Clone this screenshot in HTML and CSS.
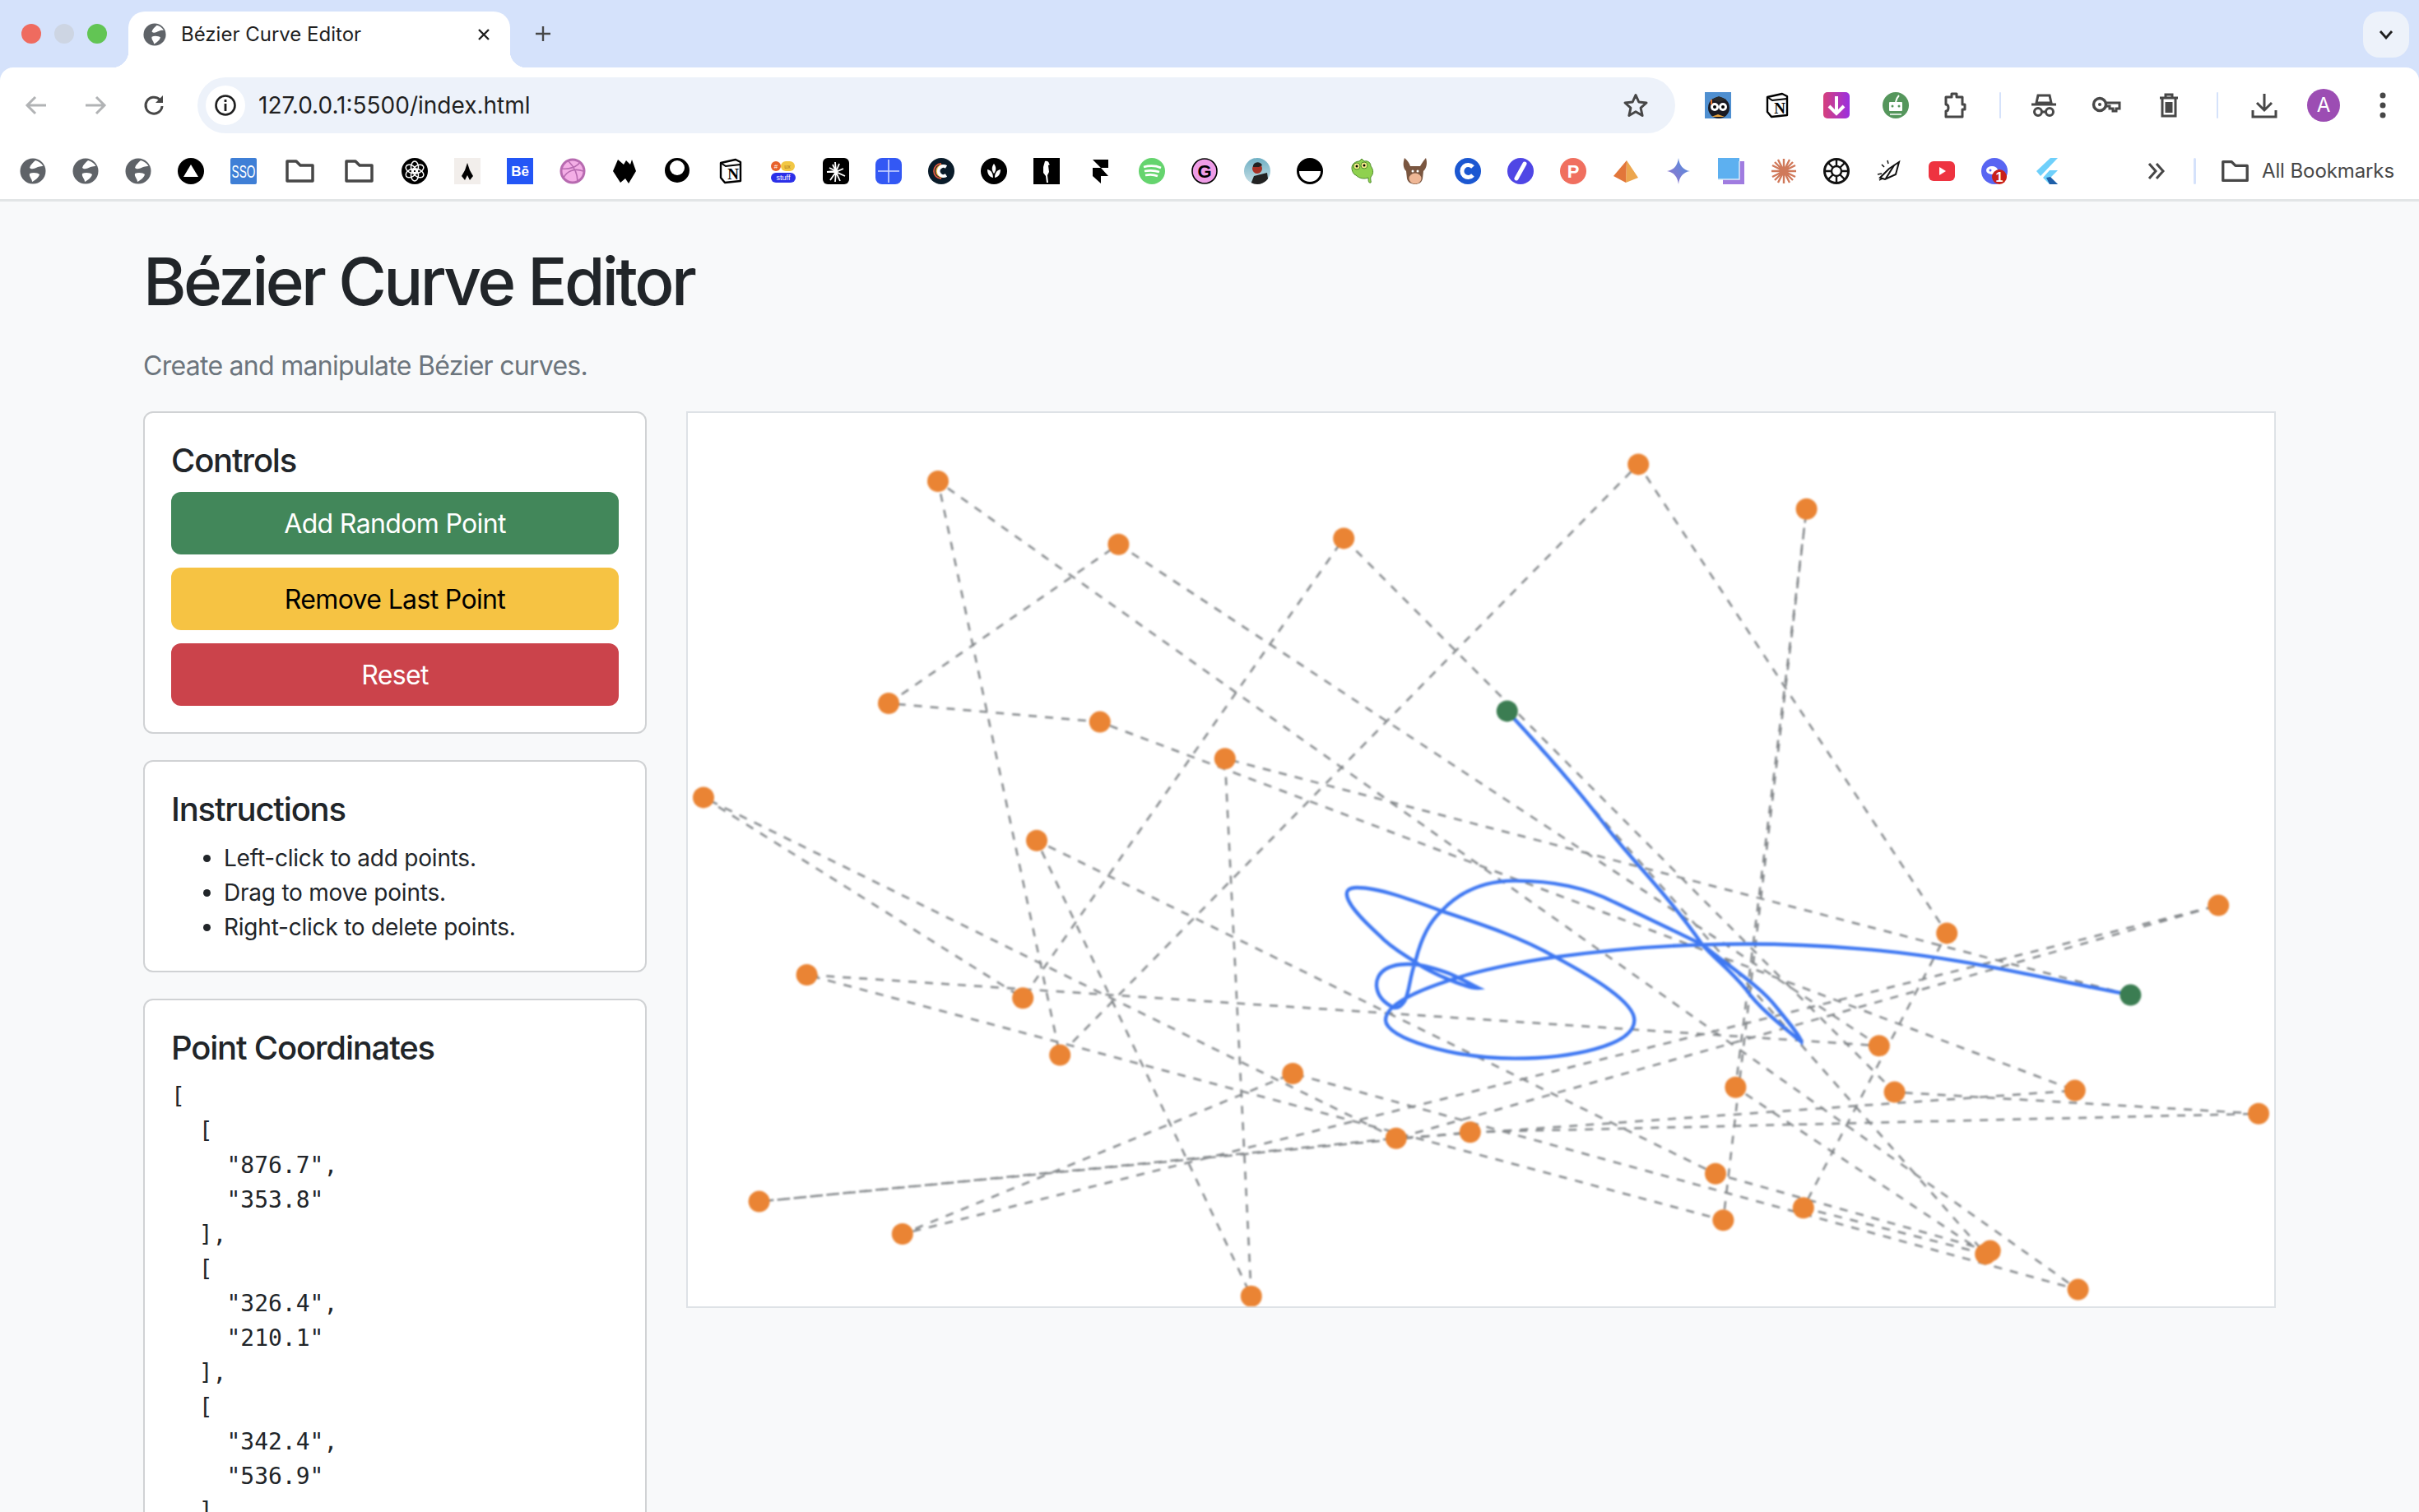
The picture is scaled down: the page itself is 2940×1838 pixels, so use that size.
FILE: index.html
```html
<!DOCTYPE html>
<html>
  <head>
    <meta charset="utf-8">
    <title>Bézier Curve Editor</title>
    <link rel="stylesheet" href="styles.css">
  </head>
  <body>
    <svg class="defs" width="0" height="0">
      <symbol id="globe" viewBox="0 0 32 32">
        <circle cx="16" cy="16" r="15.500" fill="#5f6368"/>
        <path fill="#fff" d="M19 3c-3 3-6 5-7 9 3 3 7 0 10-1 3-1 5-1 6.500-1C26 6 23 4 19 3zM12 19c4-2 10-1 12 1-1 4-5 7-9 9 0-4-4-6-3-10z"/>
      </symbol>
      <symbol id="folder" viewBox="0 0 40 32">
        <path fill="none" stroke="#474747" stroke-width="3.500" stroke-linejoin="round" d="M5 4h11l5 5h15v19H5z"/>
      </symbol>
    </svg>

    <header class="browser">
      <div class="tabstrip">
        <div class="lights">
          <span class="light red"></span>
          <span class="light grey"></span>
          <span class="light green"></span>
        </div>
        <div class="tab">
          <svg class="tab-icon"><use href="#globe"/></svg>
          <span class="tab-title">Bézier Curve Editor</span>
          <svg class="tab-close" viewBox="0 0 16 16"><path d="M2 2l12 12M14 2L2 14" stroke="#1f1f1f" stroke-width="2.400"/></svg>
        </div>
        <svg class="new-tab" viewBox="0 0 20 20"><path d="M10 1v18M1 10h18" stroke="#474747" stroke-width="2.400"/></svg>
        <div class="tab-list">
          <svg viewBox="0 0 18 12" width="18" height="12"><path d="M2 2l7 8 7-8" fill="none" stroke="#1f1f1f" stroke-width="2.800"/></svg>
        </div>
      </div>

      <div class="toolbar">
        <div class="tb-btn"><svg viewBox="0 0 32 32" width="32" height="32"><path d="M28 16H6M15 6L5 16l10 10" fill="none" stroke="#b1b3b5" stroke-width="3"/></svg></div>
        <div class="tb-btn"><svg viewBox="0 0 32 32" width="32" height="32"><path d="M4 16h22M17 6l10 10-10 10" fill="none" stroke="#b1b3b5" stroke-width="3"/></svg></div>
        <div class="tb-btn"><svg viewBox="0 0 32 32" width="32" height="32"><path d="M25 17a10 10 0 1 1-3-8l3 3" fill="none" stroke="#474747" stroke-width="3"/><path d="M26 4v9h-9z" fill="#474747"/></svg></div>
        <div class="omnibox">
          <div class="site-chip">
            <svg viewBox="0 0 28 28" width="28" height="28"><circle cx="14" cy="14" r="11.500" fill="none" stroke="#1f1f1f" stroke-width="2.600"/><path d="M14 12v9M14 7v3" stroke="#1f1f1f" stroke-width="2.800"/></svg>
          </div>
          <span class="url">127.0.0.1:5500/index.html</span>
          <svg class="star" viewBox="0 0 32 32" width="32" height="32"><path d="M16 3.500l3.800 8.500 9.200 1-6.900 6.200 2 9.300-8.100-4.700-8.100 4.700 2-9.300L3 13l9.200-1z" fill="none" stroke="#474747" stroke-width="3" stroke-linejoin="round"/></svg>
        </div>
        <div class="tb-group">
          <div class="tb-btn"><svg viewBox="0 0 32 32" width="32" height="32"><rect width="32" height="32" fill="#4f8fd0"/><circle cx="17" cy="19" r="13" fill="#1a1a22"/><circle cx="12" cy="18" r="5" fill="#fff"/><circle cx="22" cy="18" r="5" fill="#fff"/><circle cx="12" cy="18" r="2"/><circle cx="22" cy="18" r="2"/><path d="M8 9l9-4 9 4-9 3z" fill="#2b2b2b"/><path d="M7 9h2v6H7z" fill="#e8732c"/><path d="M8 30l8-3 8 3z" fill="#e8a33c"/></svg></div>
          <div class="tb-btn"><svg viewBox="0 0 32 32" width="32" height="32"><path d="M4 6l18-4 6 3v23l-19 2-5-6z" fill="#fff" stroke="#000" stroke-width="2.400" stroke-linejoin="round"/><path d="M4 6l6 4 18-2" fill="none" stroke="#000" stroke-width="2"/><text x="19" y="26" class="icon-serif" font-size="19" text-anchor="middle">N</text></svg></div>
          <div class="tb-btn"><svg viewBox="0 0 32 32" width="32" height="32"><defs><linearGradient id="pinkGrad" x1="0" x2="1"><stop offset="0" stop-color="#d6407c"/><stop offset="1" stop-color="#9a2fe0"/></linearGradient></defs><rect width="32" height="32" rx="5" fill="url(#pinkGrad)"/><path d="M16 5v20M7 17l9 9 9-9" fill="none" stroke="#fff" stroke-width="4"/></svg></div>
          <div class="tb-btn"><svg viewBox="0 0 32 32" width="32" height="32"><circle cx="16" cy="16" r="16" fill="#55965c"/><rect x="8" y="12" width="16" height="11" rx="1" fill="#fff"/><circle cx="12" cy="17" r="1.500" fill="#55965c"/><circle cx="20" cy="17" r="1.500" fill="#55965c"/><path d="M16 12c1-4 2-6 4-8" stroke="#fff" stroke-width="2" fill="none"/><path d="M9 27h14" stroke="#fff" stroke-width="1.500"/></svg></div>
          <div class="tb-btn"><svg viewBox="0 0 32 32" width="32" height="32"><path d="M5 6h7V2h6v4h7v9h3v6h-3v9H5v-7c4 0 4-8 0-8z" fill="none" stroke="#474747" stroke-width="3" stroke-linejoin="round"/></svg></div>
        </div>
        <span class="tb-sep sep-a"></span>
        <div class="tb-group">
          <div class="tb-btn wide"><svg viewBox="0 0 32 32" width="32" height="32"><path d="M9 4h14l2 9H7zM1 15h30" fill="none" stroke="#474747" stroke-width="3"/><circle cx="9" cy="24" r="4.500" fill="none" stroke="#474747" stroke-width="3"/><circle cx="23" cy="24" r="4.500" fill="none" stroke="#474747" stroke-width="3"/><path d="M13 24h6" stroke="#474747" stroke-width="3"/></svg></div>
          <div class="tb-btn wide"><svg viewBox="0 0 36 32" width="36" height="32"><circle cx="10" cy="15" r="7.500" fill="none" stroke="#474747" stroke-width="3.400"/><circle cx="10" cy="15" r="2" fill="#474747"/><path d="M17 13h17v7h-4v3h-4v-3h-4v-3h-5" fill="none" stroke="#474747" stroke-width="3"/></svg></div>
          <div class="tb-btn wide"><svg viewBox="0 0 32 32" width="32" height="32"><path d="M5 7h22M12 7V3h8v4M8 8v21h16V8M13 12v13M16 12v13M19 12v13" fill="none" stroke="#474747" stroke-width="3"/></svg></div>
        </div>
        <span class="tb-sep sep-b"></span>
        <div class="tb-group">
          <div class="tb-btn"><svg viewBox="0 0 32 32" width="32" height="32"><path d="M16 2v20M7 13l9 9 9-9M2 22v8h28v-8" fill="none" stroke="#474747" stroke-width="3"/></svg></div>
          <div class="tb-btn"><span class="avatar">A</span></div>
          <div class="tb-btn"><svg viewBox="0 0 8 32" width="8" height="32"><circle cx="4" cy="4" r="3.500" fill="#474747"/><circle cx="4" cy="16" r="3.500" fill="#474747"/><circle cx="4" cy="28" r="3.500" fill="#474747"/></svg></div>
        </div>
      </div>

      <nav class="bookmarks">
        <svg class="bm"><use href="#globe"/></svg>
        <svg class="bm"><use href="#globe"/></svg>
        <svg class="bm"><use href="#globe"/></svg>
        <svg class="bm" viewBox="0 0 32 32"><circle cx="16" cy="16" r="16"/><path d="M16 8l9 15H7z" fill="#fff"/></svg>
        <svg class="bm" viewBox="0 0 32 32"><rect width="32" height="32" rx="2" fill="#3f7fd6"/><text x="25.800" y="24" class="icon-sans" font-size="22" fill="#fff" text-anchor="middle" transform="scale(.62 1)">SSO</text></svg>
        <svg class="bm-folder"><use href="#folder"/></svg>
        <svg class="bm-folder"><use href="#folder"/></svg>
        <svg class="bm" viewBox="0 0 32 32"><circle cx="16" cy="16" r="16"/><g fill="none" stroke="#fff" stroke-width="1.500"><ellipse cx="16" cy="11" rx="4.500" ry="7"/><ellipse cx="16" cy="11" rx="4.500" ry="7" transform="rotate(60 16 16)"/><ellipse cx="16" cy="11" rx="4.500" ry="7" transform="rotate(120 16 16)"/><ellipse cx="16" cy="11" rx="4.500" ry="7" transform="rotate(180 16 16)"/><ellipse cx="16" cy="11" rx="4.500" ry="7" transform="rotate(240 16 16)"/><ellipse cx="16" cy="11" rx="4.500" ry="7" transform="rotate(300 16 16)"/></g></svg>
        <svg class="bm" viewBox="0 0 32 32"><rect width="32" height="32" fill="#f2eeeb"/><path d="M16 6l3 9 4 7-4 5-3-6-3 6-4-5 4-7z"/></svg>
        <svg class="bm" viewBox="0 0 32 32"><rect width="32" height="32" fill="#2356f6"/><text x="16" y="22" class="icon-sans" font-size="17" font-weight="700" fill="#fff" text-anchor="middle">Bē</text></svg>
        <svg class="bm" viewBox="0 0 32 32"><circle cx="16" cy="16" r="15.500" fill="#b76ab0"/><circle cx="16" cy="16" r="12.500" fill="#f4aee6"/><path d="M11 4c6 6 11 15 11 25M3 13c9 1 18-2 22-8M5 24c4-8 13-12 24-8" fill="none" stroke="#b76ab0" stroke-width="1.600"/></svg>
        <svg class="bm" viewBox="0 0 32 32"><path d="M7 2l7 6 3-5 5 5 2-6 5 14-9 15-4-6-6 5-9-14z"/></svg>
        <svg class="bm" viewBox="0 0 32 32"><circle cx="15" cy="15" r="15"/><circle cx="15" cy="12" r="9" fill="#fff"/></svg>
        <svg class="bm" viewBox="0 0 32 32"><path d="M4 6l18-4 6 3v23l-19 2-5-6z" fill="#fff" stroke="#000" stroke-width="2.400" stroke-linejoin="round"/><path d="M4 6l6 4 18-2" fill="none" stroke="#000" stroke-width="2"/><text x="19" y="26" class="icon-serif" font-size="19" text-anchor="middle">N</text></svg>
        <svg class="bm" viewBox="0 0 32 32"><circle cx="7" cy="10" r="6" fill="#e8622c"/><rect x="13" y="4" width="17" height="12" rx="6" fill="#f2c744"/><rect x="1" y="18" width="30" height="12" rx="6" fill="#2b2fe8"/><text x="7" y="13" font-size="8" fill="#fff" class="icon-sans" text-anchor="middle">#</text><text x="21" y="13" font-size="7" fill="#a8741a" class="icon-sans" text-anchor="middle">ux</text><text x="16" y="27" font-size="9" fill="#fff" class="icon-sans" text-anchor="middle">stuff</text></svg>
        <svg class="bm" viewBox="0 0 32 32"><rect width="32" height="32" rx="6"/><path d="M15 5l1 11-4-8 4 8-8-4 8 4-11 1 11 0-7 10 7-10-1 12 1-12 5 11-5-11 11 5-11-5 9-4-9 4 4-10-4 10" fill="none" stroke="#fff" stroke-width="1.800"/></svg>
        <svg class="bm" viewBox="0 0 32 32"><rect width="32" height="32" rx="8" fill="#3358f4"/><path d="M16 2v28M3 16h26" stroke="#cfd8ff" stroke-width="1.600"/></svg>
        <svg class="bm" viewBox="0 0 32 32"><circle cx="16" cy="16" r="16" fill="#0a1c2a"/><g fill="none" stroke-width="1.800"><path d="M16 7a9 9 0 0 0 0 18" stroke="#e25c3f"/><path d="M17 9a7 7 0 0 0 0 14" stroke="#f3b23d"/><path d="M18 11a5 5 0 0 0 0 10" stroke="#5cb4e8"/></g><path d="M22 11a6 6 0 1 0 0 10" fill="none" stroke="#fff" stroke-width="4"/></svg>
        <svg class="bm" viewBox="0 0 32 32"><circle cx="16" cy="16" r="16"/><path d="M16 7c3 4 3 8 0 12-3-4-3-8 0-12zM8 14c5 1 7 5 7 10-5-1-7-5-7-10zM24 14c-5 1-7 5-7 10 5-1 7-5 7-10z" fill="#fff"/></svg>
        <svg class="bm" viewBox="0 0 32 32"><rect width="32" height="32"/><path d="M14 4c3-1 5 1 5 3l1 1-2 1 1 8-2 4 1 9h-2l-1-8-3-4 0-7z" fill="#fff"/></svg>
        <svg class="bm" viewBox="0 0 32 32"><path d="M8 2h19v10H18zM8 12h10l9 10H18v9l-10-9z"/></svg>
        <svg class="bm" viewBox="0 0 32 32"><circle cx="16" cy="16" r="16" fill="#65d46e"/><path d="M6 11c7-2 14-2 21 1M7 16c6-1 12-1 18 1M8 21c5-1 10-1 15 1" fill="none" stroke="#fff" stroke-width="2.600"/></svg>
        <svg class="bm" viewBox="0 0 32 32"><circle cx="16" cy="16" r="15" fill="#ee9ce6" stroke="#000" stroke-width="1.600"/><text x="16" y="24" font-size="22" font-weight="700" class="icon-sans" text-anchor="middle">G</text></svg>
        <svg class="bm" viewBox="0 0 32 32"><defs><linearGradient id="skyGrad" x1="0" x2="0" y1="0" y2="1"><stop offset="0" stop-color="#6fb0c4"/><stop offset="1" stop-color="#c8dfe6"/></linearGradient><clipPath id="photoClip"><circle cx="16" cy="16" r="16"/></clipPath></defs><g clip-path="url(#photoClip)"><rect width="32" height="32" fill="url(#skyGrad)"/><path d="M8 32l4-10 16-4 2 14z" fill="#222"/><circle cx="16" cy="13" r="6" fill="#a83226"/><path d="M11 9c2-5 9-5 11 0l-4 2-7 0z" fill="#222"/></g></svg>
        <svg class="bm" viewBox="0 0 32 32"><circle cx="16" cy="16" r="14.500" fill="#fff" stroke="#000" stroke-width="3"/><path d="M1 16a15 15 0 0 1 30 0z"/></svg>
        <svg class="bm" viewBox="0 0 32 32"><path d="M3 12c0-5 5-8 9-8l3-3 3 3c5-1 8 2 8 6 4 5 3 10 0 13-1 3 1 6 0 7-3 1-3-3-3-6-5 2-11 1-15-3-3-1-5-5-5-9z" fill="#8fd14f" stroke="#4d8a2a"/><circle cx="9" cy="10" r="4" fill="#f7ee8a" stroke="#4d8a2a"/><circle cx="18" cy="9" r="4" fill="#f7ee8a" stroke="#4d8a2a"/><circle cx="9" cy="10" r="1.500"/><circle cx="18" cy="9" r="1.500"/></svg>
        <svg class="bm" viewBox="0 0 32 32"><path d="M3 0c4 3 6 7 7 10h12c2-3 4-7 7-10 2 6 1 12-3 16l-1 9c-1 5-5 7-9 7s-9-2-10-7l-1-9C1 12 1 6 3 0z" fill="#7a5640"/><ellipse cx="16" cy="25" rx="7.500" ry="6.500" fill="#efb796"/><circle cx="13" cy="16" r="1.500" fill="#fff"/><circle cx="19" cy="16" r="1.500" fill="#fff"/></svg>
        <svg class="bm" viewBox="0 0 32 32"><circle cx="16" cy="16" r="16" fill="#1b57d1"/><path d="M22 11a7.500 7.500 0 1 0 0 10" fill="none" stroke="#fff" stroke-width="5"/></svg>
        <svg class="bm" viewBox="0 0 32 32"><circle cx="16" cy="16" r="16" fill="#4f46e5"/><path d="M21 7L11 25" stroke="#fff" stroke-width="5" stroke-linecap="round"/></svg>
        <svg class="bm" viewBox="0 0 32 32"><circle cx="16" cy="16" r="16" fill="#f06f5f"/><text x="16" y="24" font-size="22" font-weight="700" fill="#fff" class="icon-sans" text-anchor="middle">P</text></svg>
        <svg class="bm" viewBox="0 0 32 32"><path d="M17 3l14 21-15 6z" fill="#eca64e"/><path d="M17 3L1 22l15 8z" fill="#e2763a"/></svg>
        <svg class="bm" viewBox="0 0 32 32"><defs><linearGradient id="starGrad" x1="0" x2="1" y1="1" y2="0"><stop offset="0" stop-color="#9b72cb"/><stop offset="1" stop-color="#4b90e0"/></linearGradient></defs><path d="M16 0c1 9 6 15 14 16-8 1-13 7-14 16-1-9-6-15-14-16 8-1 13-7 14-16z" fill="url(#starGrad)"/></svg>
        <svg class="bm" viewBox="0 0 32 32"><rect x="6" y="4" width="26" height="28" fill="#a07ce0"/><rect x="0" y="0" width="26" height="26" fill="#5db0f0"/><path d="M0 26h26V4" fill="none" stroke="#d9ecf9" stroke-width="1.500"/></svg>
        <svg class="bm" viewBox="0 0 32 32"><g stroke="#d0795a" stroke-width="2.400"><path d="M16 1v30M1 16h30M5 5l22 22M27 5L5 27M9 2l14 28M23 2L9 30M2 9l28 14M30 9L2 23"/></g></svg>
        <svg class="bm" viewBox="0 0 32 32"><circle cx="16" cy="16" r="14.500" fill="none" stroke="#111" stroke-width="3"/><circle cx="16" cy="16" r="6" fill="none" stroke="#111" stroke-width="2.400"/><path d="M16 2v8M16 22v8M2 16h8M22 16h8M6 6l6 6M20 20l6 6M26 6l-6 6M12 20l-6 6" stroke="#111" stroke-width="2.400"/></svg>
        <svg class="bm" viewBox="0 0 32 32"><path d="M16 13l12-8-4 15-13 6-6-2z" fill="#fff" stroke="#111" stroke-width="2"/><path d="M12 25l10-16" stroke="#111" stroke-width="2"/><path d="M14 3l1 4M7 8l3 3M2 20l5-1M4 27l4-2" stroke="#111" stroke-width="1.500"/></svg>
        <svg class="bm" viewBox="0 0 32 32"><rect x="0" y="4" width="32" height="24" rx="6" fill="#ee3340"/><path d="M13 11l8 5-8 5z" fill="#fff"/></svg>
        <svg class="bm" viewBox="0 0 32 32"><circle cx="16" cy="16" r="16" fill="#5865f2"/><ellipse cx="13" cy="15" rx="7" ry="5" fill="#fff"/><circle cx="11" cy="15" r="1.500" fill="#5865f2"/><circle cx="22" cy="23" r="9" fill="#c9201a"/><text x="22" y="29" font-size="16" font-weight="700" fill="#fff" class="icon-sans" text-anchor="middle">1</text></svg>
        <svg class="bm" viewBox="0 0 32 32"><path d="M20 0h9L8 22 3 16z" fill="#6fd0fb"/><path d="M19 15h10l-9 9 9 8H19l-8-8z" fill="#6fd0fb"/><path d="M15 24l5-1 9 9H19z" fill="#1f5fa8"/></svg>
        <div class="bm-right">
          <svg class="bm-more" viewBox="0 0 24 24" width="24" height="24"><path d="M4 3l8 9-8 9M13 3l8 9-8 9" fill="none" stroke="#474747" stroke-width="3"/></svg>
          <span class="bm-sep"></span>
          <svg class="bm-folder all"><use href="#folder"/></svg>
          <span class="bm-label">All Bookmarks</span>
        </div>
      </nav>
    </header>

    <main class="container">
      <h1>Bézier Curve Editor</h1>
      <p class="lead">Create and manipulate Bézier curves.</p>

      <div class="layout">
        <aside>
          <section class="card">
            <h5>Controls</h5>
            <button class="btn btn-green">Add Random Point</button>
            <button class="btn btn-yellow">Remove Last Point</button>
            <button class="btn btn-red">Reset</button>
          </section>
          <section class="card">
            <h5>Instructions</h5>
            <ul>
              <li>Left-click to add points.</li>
              <li>Drag to move points.</li>
              <li>Right-click to delete points.</li>
            </ul>
          </section>
          <section class="card">
            <h5>Point Coordinates</h5>
<pre>[
  [
    "876.7",
    "353.8"
  ],
  [
    "326.4",
    "210.1"
  ],
  [
    "342.4",
    "536.9"
  ]</pre>
          </section>
        </aside>

        <div class="canvas-wrap">
          <svg class="canvas" viewBox="0 0 964 543">
            <g class="guides">
              <polyline points="876.7,353.8 326.4,210.1 342.4,536.9 212,259.9 624.5,462.4 791.4,509.3"/>
              <polyline points="497.9,181.2 788.6,511.2 636.7,409.9 679.8,58.4 629.2,490.6 72.3,341.5 723.9,384.6 261.7,79.9 122,176.5 250.4,187.8 842.9,411.8 430.4,440.9"/>
              <polyline points="788.6,511.2 677.9,483.1 765.1,316.2 577.6,31.2 226.1,390.3 152,41.5 844.8,532.8 367.6,401.5 130.4,499 930.1,299.3 430.4,440.9 43.3,479.3 475.4,437.1 954.5,425.9 733.3,412.8 398.6,76.2 203.6,355.6 9.5,233.7 430.4,440.9"/>
            </g>
            <path class="curve" d="M876.7 353.7C820 343 770 330 712 325.7C680 323 650 322 616.5 323.2C585 324 555 327 527.2 330.7C508 333.5 490 337 473.6 341.5C455 347 424 357 424 369C424 380 465 392.3 502.6 392.3C535 392.3 575.2 385 575.2 369C575.2 358 550 343 527.2 330.7C505 318 480 310 458 302.7C440 296 420 288.5 406.6 288.5C400 288.5 400.4 292 400.4 292.3C400.4 299 412 310 420 317.3C427 325 435 329 442.4 334C452 341 475 350 480.3 349.5C477 348 467 342 460.2 339.8C452 337 447 335.5 442.4 335.3C437 334.6 429 335 424 338C416 343 416 355 429 361.5C432 362 434 360 435.7 357.3C439 350 438 345 442.4 332.3C446 318 452 308 458 302.7C470 290 485 284.3 502.6 284.3C525 284.3 545 288 562.9 297.3C585 308 600 315 616.5 323.2C635 338 652 349 661.1 360.7C667 368 677 380 676.7 382.3C668 375 652 363 643.3 350.7C632 337 625 333 616.5 323.2C595 292 570 268 556.2 249C540 228 520 205 497.9 181.2"/>
            <g class="dots">
              <circle cx="326.4" cy="210.1" r="6.500"/><circle cx="342.4" cy="536.9" r="6.500"/><circle cx="212" cy="259.9" r="6.500"/><circle cx="624.5" cy="462.4" r="6.500"/><circle cx="679.8" cy="58.4" r="6.500"/><circle cx="636.7" cy="409.9" r="6.500"/><circle cx="791.4" cy="509.3" r="6.500"/><circle cx="788.6" cy="511.2" r="6.500"/><circle cx="398.6" cy="76.2" r="6.500"/><circle cx="203.6" cy="355.6" r="6.500"/><circle cx="9.5" cy="233.7" r="6.500"/><circle cx="430.4" cy="440.9" r="6.500"/><circle cx="930.1" cy="299.3" r="6.500"/><circle cx="130.4" cy="499" r="6.500"/><circle cx="367.6" cy="401.5" r="6.500"/><circle cx="844.8" cy="532.8" r="6.500"/><circle cx="152" cy="41.5" r="6.500"/><circle cx="226.1" cy="390.3" r="6.500"/><circle cx="577.6" cy="31.2" r="6.500"/><circle cx="765.1" cy="316.2" r="6.500"/><circle cx="677.9" cy="483.1" r="6.500"/><circle cx="475.4" cy="437.1" r="6.500"/><circle cx="954.5" cy="425.9" r="6.500"/><circle cx="43.3" cy="479.3" r="6.500"/><circle cx="733.3" cy="412.8" r="6.500"/><circle cx="842.9" cy="411.8" r="6.500"/><circle cx="250.4" cy="187.8" r="6.500"/><circle cx="122" cy="176.5" r="6.500"/><circle cx="261.7" cy="79.9" r="6.500"/><circle cx="723.9" cy="384.6" r="6.500"/><circle cx="72.3" cy="341.5" r="6.500"/><circle cx="629.2" cy="490.6" r="6.500"/>
              <circle class="end" cx="876.7" cy="353.8" r="6.500"/><circle class="end" cx="497.9" cy="181.2" r="6.500"/>
            </g>
          </svg>
        </div>
      </div>
    </main>
  </body>
</html>
```

FILE: styles.css
```css
html,
body {
  margin: 0;
  height: 1838px;
  overflow: hidden;
}

body {
  background: #f8f9fa;
  color: #212529;
  font-family: Inter, "Liberation Sans", sans-serif;
  font-size: 32px;
  line-height: 1.5;
}

.defs {
  position: absolute;
}

.icon-sans {
  font-family: "Liberation Sans", sans-serif;
}

.icon-serif {
  font-family: "Liberation Serif", serif;
  font-weight: 700;
}

/* browser chrome */
.browser {
  background: #d5e2fb;
}

.tabstrip {
  display: flex;
  align-items: flex-end;
  height: 82px;
  box-sizing: border-box;
  padding-right: 12px;
}

.lights {
  display: flex;
  align-self: center;
  gap: 16px;
  padding: 0 26px;
}

.light {
  width: 24px;
  height: 24px;
  border-radius: 50%;
}

.red {
  background: #ef6b5f;
}

.grey {
  background: #cdd5e3;
}

.green {
  background: #62c554;
}

.tab {
  position: relative;
  display: flex;
  align-items: center;
  width: 464px;
  height: 68px;
  padding: 0 24px 13px 18px;
  box-sizing: border-box;
  background: #fff;
  border-radius: 20px 20px 0 0;
}

/* flared bottom corners of the active tab */
.tab::before,
.tab::after {
  content: "";
  position: absolute;
  bottom: 0;
  width: 20px;
  height: 20px;
}

.tab::before {
  left: -20px;
  background: radial-gradient(circle at 0 0, transparent 20px, #fff 20.5px);
}

.tab::after {
  right: -20px;
  background: radial-gradient(circle at 100% 0, transparent 20px, #fff 20.5px);
}

.tab-icon {
  width: 28px;
  height: 28px;
}

.tab-title {
  flex: 1;
  margin-left: 18px;
  font-size: 24px;
  color: #1f1f1f;
}

.tab-close {
  width: 16px;
  height: 16px;
}

.new-tab {
  align-self: center;
  width: 20px;
  height: 20px;
  margin-left: 30px;
}

.tab-list {
  display: flex;
  align-items: center;
  justify-content: center;
  align-self: flex-start;
  width: 56px;
  height: 56px;
  margin: 14px 0 0 auto;
  background: #edf2fa;
  border-radius: 20px;
}

.toolbar {
  display: flex;
  align-items: center;
  height: 92px;
  padding-left: 8px;
  background: #fff;
  border-radius: 16px 16px 0 0;
}

.tb-btn {
  display: flex;
  align-items: center;
  justify-content: center;
  width: 72px;
  height: 68px;
}

.tb-btn.wide {
  width: 76px;
}

.tb-group {
  display: flex;
}

.omnibox {
  display: flex;
  align-items: center;
  width: 1796px;
  height: 68px;
  margin-left: 16px;
  padding: 0 32px 0 10px;
  box-sizing: border-box;
  background: #edf2fa;
  border-radius: 34px;
}

.site-chip {
  display: flex;
  align-items: center;
  justify-content: center;
  width: 48px;
  height: 48px;
  background: #fff;
  border-radius: 50%;
}

.url {
  flex: 1;
  margin-left: 16px;
  font-size: 28px;
  color: #1f1f1f;
}

.toolbar .omnibox + .tb-group {
  margin-left: 16px;
}

.tb-sep {
  width: 2px;
  height: 32px;
  background: #d5e2fb;
  border-radius: 2px;
}

.sep-a {
  margin: 0 14px 0 18px;
}

.sep-b {
  margin: 0 20px;
}

.avatar {
  display: flex;
  align-items: center;
  justify-content: center;
  width: 40px;
  height: 40px;
  background: #9c4db3;
  border-radius: 50%;
  color: #fff;
  font-size: 24px;
}

.bookmarks {
  display: flex;
  align-items: center;
  gap: 32px;
  height: 68px;
  padding: 0 30px 0 24px;
  background: #fff;
  border-bottom: 3px solid #e2e5e6;
}

.bm {
  flex: none;
  width: 32px;
  height: 32px;
}

.bm-folder {
  flex: none;
  width: 40px;
  height: 32px;
}

.bm-right {
  display: flex;
  align-items: center;
  margin-left: auto;
}

.bm-sep {
  width: 3px;
  height: 32px;
  margin: 0 28px 0 34px;
  background: #d5e2fb;
  border-radius: 2px;
}

.bm-folder.all {
  width: 38px;
}

.bm-label {
  margin-left: 14px;
  font-size: 24px;
  letter-spacing: -0.1px;
  color: #474747;
}

/* page */
.container {
  width: 2640px;
  margin: 0 auto;
  padding: 49px 24px 0;
  box-sizing: border-box;
}

h1 {
  margin: 0 0 31px;
  font-size: 80px;
  font-weight: 500;
  line-height: 96px;
  letter-spacing: -3.6px;
}

.lead {
  margin: 0 0 31px;
  color: #6c757d;
  letter-spacing: -0.72px;
}

.layout {
  display: grid;
  grid-template-columns: 612px 1932px;
  gap: 48px;
  align-items: start;
}

.card {
  margin-bottom: 32px;
  padding: 32px;
  background: #fff;
  border: 2px solid #d0d2d4;
  border-radius: 12px;
}

h5 {
  margin: 0 0 14px;
  padding-top: 2px;
  font-size: 40px;
  font-weight: 500;
  line-height: 48px;
  letter-spacing: -1.2px;
}

.btn {
  display: block;
  width: 100%;
  height: 76px;
  margin-bottom: 16px;
  padding: 2px 0 0;
  border: 0;
  border-radius: 12px;
  font: inherit;
  letter-spacing: -0.65px;
}

.btn:last-child {
  margin-bottom: 0;
}

.btn-green {
  background: #42875a;
  color: #fff;
}

.btn-yellow {
  background: #f6c343;
  color: #000;
}

.btn-red {
  background: #cb434b;
  color: #fff;
}

ul {
  margin: 0;
  padding-left: 64px;
  font-size: 28px;
  letter-spacing: -0.22px;
}

pre {
  margin: 0;
  font-family: "DejaVu Sans Mono", monospace;
  font-size: 28px;
  line-height: 42px;
}

.canvas-wrap {
  background: #fff;
  border: 2px solid #dee2e6;
  height: 1086px;
}

.canvas {
  display: block;
  width: 1928px;
  height: 1086px;
  filter: blur(0.8px);
}

.guides polyline {
  fill: none;
  stroke: #84888b;
  stroke-width: 1.250;
  stroke-dasharray: 5 5;
}

.curve {
  fill: none;
  stroke: #3f78f2;
  stroke-width: 2.200;
}

.dots circle {
  fill: #ea8434;
}

.dots .end {
  fill: #3b7d52;
}
```
